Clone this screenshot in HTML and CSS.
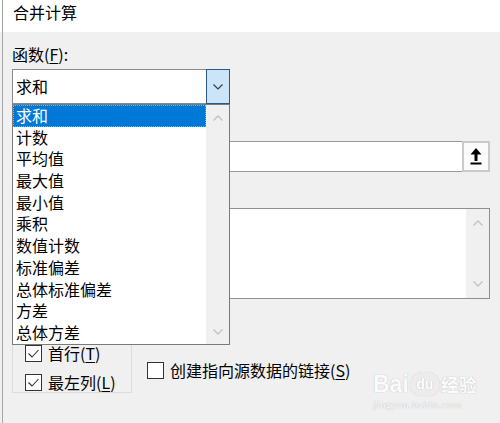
FILE: index.html
```html
<!DOCTYPE html>
<html lang="zh-CN">
<head>
<meta charset="utf-8">
<title>合并计算</title>
<link rel="stylesheet" href="styles.css">
</head>
<body>
<div class="window">
  <div class="titlebar">合并计算</div>
  <div class="content">
    <div class="label">函数(<u>F</u>):</div>
    <div class="combo">
      <div class="combo-text">求和</div>
      <div class="combo-btn">
        <svg width="10" height="6" viewBox="0 0 10 6"><path d="M0.5 0.5 L5 5 L9.5 0.5" fill="none" stroke="#3c3c3c" stroke-width="1.2"/></svg>
      </div>
    </div>
    <div class="spacer gap-ref"></div>
    <div class="ref-row">
      <div class="ref-input"></div>
      <div class="ref-btn">
        <svg width="12" height="17" viewBox="0 0 12 17"><path d="M6 0 L11.5 6.5 L7.5 6.5 L7.5 13 L4.5 13 L4.5 6.5 L0.5 6.5 Z" fill="#000"/><rect x="0.5" y="14.5" width="11" height="2" fill="#000"/></svg>
      </div>
    </div>
    <div class="spacer gap-list"></div>
    <div class="listbox">
      <div class="lb-area"></div>
      <div class="vscroll">
        <svg width="10" height="6" viewBox="0 0 10 6"><path d="M0.5 5.5 L5 1 L9.5 5.5" fill="none" stroke="#c2c2c2" stroke-width="1.3"/></svg>
        <svg width="10" height="6" viewBox="0 0 10 6"><path d="M0.5 0.5 L5 5 L9.5 0.5" fill="none" stroke="#c2c2c2" stroke-width="1.3"/></svg>
      </div>
    </div>
    <div class="bottom">
      <div class="group">
        <label class="check"><span class="box"><svg width="15" height="15" viewBox="0 0 15 15"><path d="M2.5 7.5 L6 11 L12.5 4" fill="none" stroke="#333" stroke-width="1.1"/></svg></span><span class="ctext">首行(<u>T</u>)</span></label>
        <label class="check"><span class="box"><svg width="15" height="15" viewBox="0 0 15 15"><path d="M2.5 7.5 L6 11 L12.5 4" fill="none" stroke="#333" stroke-width="1.1"/></svg></span><span class="ctext">最左列(<u>L</u>)</span></label>
      </div>
      <label class="check link"><span class="box"></span><span class="ctext">创建指向源数据的链接(<u>S</u>)</span></label>
    </div>
  </div>

  <div class="dropdown">
    <ul class="items">
      <li class="selected">求和</li>
      <li>计数</li>
      <li>平均值</li>
      <li>最大值</li>
      <li>最小值</li>
      <li>乘积</li>
      <li>数值计数</li>
      <li>标准偏差</li>
      <li>总体标准偏差</li>
      <li>方差</li>
      <li>总体方差</li>
    </ul>
    <div class="vscroll dd-scroll">
      <svg width="10" height="6" viewBox="0 0 10 6"><path d="M0.5 5.5 L5 1 L9.5 5.5" fill="none" stroke="#c2c2c2" stroke-width="1.3"/></svg>
      <svg width="10" height="6" viewBox="0 0 10 6"><path d="M0.5 0.5 L5 5 L9.5 0.5" fill="none" stroke="#c2c2c2" stroke-width="1.3"/></svg>
    </div>
  </div>

  <div class="watermark">
    <div class="wm-top"><span class="wm-bai">Bai</span><span class="wm-du">du</span><span class="wm-jy">经验</span></div>
    <div class="wm-url">jingyan.baidu.com</div>
  </div>
</div>
</body>
</html>
```

FILE: styles.css
```css
html, body {
  margin: 0;
  padding: 0;
}
body {
  width: 500px;
  height: 423px;
  overflow: hidden;
  background: linear-gradient(#ffffff 32px, #f0f0f0 32px);
  font-family: "Noto Sans CJK SC", "Microsoft YaHei", sans-serif;
  font-size: 16px;
  color: #000;
}
.window {
  position: relative;
  margin-left: 2px;
  height: 423px;
  border-left: 1px solid #a4a4a4;
}
.titlebar {
  height: 32px;
  background: #fff;
  padding-left: 10px;
  line-height: 25px;
  font-size: 16px;
}
.content {
  padding: 12px 0 0 9px;
}
.label {
  line-height: 20px;
  height: 20px;
}
.spacer {
  height: 20px;
}
u {
  text-decoration: underline;
  text-underline-offset: 2px;
  text-decoration-thickness: 1px;
}
.combo {
  margin-top: 5px;
  display: flex;
  width: 216px;
  height: 33px;
  border: 1px solid #8a8a8a;
  background: #fff;
}
.combo-text {
  flex: 1;
  padding-left: 3px;
  line-height: 33px;
}
.combo-btn {
  width: 22px;
  margin: -1px -1px -1px 0;
  background: #cce4f7;
  border: 1px solid #2a5a8c;
  display: flex;
  align-items: center;
  justify-content: center;
}
.gap-ref {
  margin-top: 14px;
}
.ref-row {
  margin-top: 3px;
  display: flex;
  width: 476px;
  height: 29px;
  border: 1px solid #9a9a9a;
  background: #fff;
}
.ref-input {
  flex: 1;
}
.ref-btn {
  width: 24px;
  margin: -1px -1px -1px 0;
  border: 2px solid #cacaca;
  background: #fbfbfb;
  display: flex;
  align-items: center;
  justify-content: center;
}
.gap-list {
  margin-top: 14px;
}
.listbox {
  margin-top: 2px;
  display: flex;
  width: 476px;
  height: 89px;
  border: 1px solid #8f8f8f;
  background: #fff;
}
.lb-area {
  flex: 1;
}
.vscroll {
  width: 23px;
  background: #f0f0f0;
  display: flex;
  flex-direction: column;
  align-items: center;
  justify-content: space-between;
  padding: 11px 0 11px;
  box-sizing: border-box;
}
.bottom {
  margin-top: 19px;
  display: flex;
  align-items: flex-end;
}
.group {
  width: 106px;
  height: 60px;
  border: 1px solid #dcdcdc;
  padding: 0 0 13px 12px;
  display: flex;
  flex-direction: column;
  gap: 12px;
}
.group .check:first-child {
  margin-top: 26px;
}
.check {
  display: flex;
  align-items: center;
  height: 17px;
}
.box {
  width: 15px;
  height: 15px;
  border: 1px solid #333;
  background: #fff;
  display: block;
  flex: none;
}
.box svg {
  display: block;
}
.ctext {
  margin-left: 6px;
  line-height: 17px;
  white-space: nowrap;
}
.link {
  margin-left: 15px;
  margin-bottom: 14px;
}
.dropdown {
  position: absolute;
  left: 9px;
  top: 104px;
  width: 216px;
  height: 239px;
  border: 1px solid #7a7a7a;
  background: #fff;
  display: flex;
}
.items {
  list-style: none;
  margin: 0;
  padding: 0;
  flex: 1;
}
.items li {
  height: 21.7px;
  line-height: 21.7px;
  padding-left: 3px;
  white-space: nowrap;
}
.items li.selected {
  background: #0078d7;
  color: #fff;
  outline: 1px dotted #e89a3c;
  outline-offset: -1px;
}
.dd-scroll {
  padding: 10px 0 9px;
}
.watermark {
  position: absolute;
  left: 370px;
  top: 359px;
  width: 106px;
  color: #fbfbfb;
  text-shadow: 0 0 1px #c4c4c4, 0 0 1px #c4c4c4;
  pointer-events: none;
}
.wm-top {
  display: flex;
  align-items: flex-end;
  height: 37px;
  font-family: "Liberation Sans", sans-serif;
  font-weight: bold;
}
.wm-bai {
  font-size: 23px;
  line-height: 24px;
}
.wm-du {
  font-size: 14px;
  line-height: 24px;
  width: 30px;
  height: 24px;
  text-align: center;
  border-radius: 13px 13px 11px 11px;
  background: #ececec;
  box-shadow: 0 0 1px #c4c4c4;
  color: #fff;
  margin: 0 1px;
}
.wm-jy {
  font-family: "Noto Sans CJK SC", sans-serif;
  font-size: 18px;
  line-height: 24px;
}
.wm-url {
  font-family: "Liberation Serif", serif;
  font-size: 11px;
  line-height: 12px;
  margin-top: 2px;
  letter-spacing: 0.4px;
}
```
